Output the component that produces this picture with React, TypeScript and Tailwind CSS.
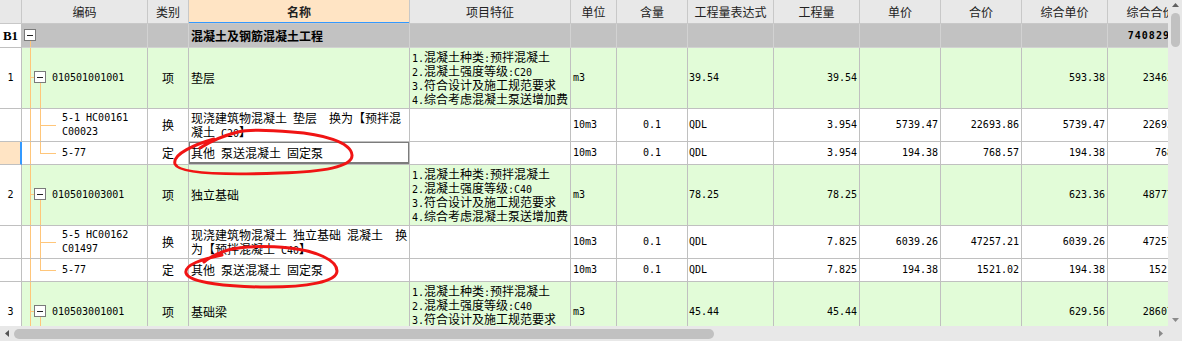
import React from "react";

type Row = {
  kind: "group" | "item" | "sub";
  h: string;
  no?: string;
  code?: string[];
  type?: string;
  name?: string[];
  feat?: string[];
  unit?: string;
  hl?: string;
  expr?: string;
  qty?: string;
  dj?: string;
  hj?: string;
  zhdj?: string;
  zhhj?: string;
  last?: boolean;
  selected?: boolean;
};

const W = [
  "w-[22px]",
  "w-[126px]",
  "w-[41px]",
  "w-[221px]",
  "w-[161px]",
  "w-[46px]",
  "w-[71px]",
  "w-[86px]",
  "w-[86px]",
  "w-[81px]",
  "w-[81px]",
  "w-[86px]",
  "w-[86px]",
];

const HEAD = ["", "编码", "类别", "名称", "项目特征", "单位", "含量", "工程量表达式", "工程量", "单价", "合价", "综合单价", "综合合价"];

const FEAT_C20 = ["1.混凝土种类:预拌混凝土", "2.混凝土强度等级:C20", "3.符合设计及施工规范要求", "4.综合考虑混凝土泵送增加费"];
const FEAT_C40 = ["1.混凝土种类:预拌混凝土", "2.混凝土强度等级:C40", "3.符合设计及施工规范要求", "4.综合考虑混凝土泵送增加费"];

const ROWS: Row[] = [
  { kind: "group", h: "h-[24px]", no: "B1", name: ["混凝土及钢筋混凝土工程"], zhhj: "740829.56" },
  {
    kind: "item", h: "h-[61px]", no: "1", code: ["010501001001"], type: "项", name: ["垫层"], feat: FEAT_C20,
    unit: "m3", expr: "39.54", qty: "39.54", zhdj: "593.38", zhhj: "23462.25",
  },
  {
    kind: "sub", h: "h-[33px]", code: ["5-1 HC00161", "C00023"], type: "换",
    name: ["现浇建筑物混凝土 垫层  换为【预拌混", "凝土 C20】"],
    unit: "10m3", hl: "0.1", expr: "QDL", qty: "3.954", dj: "5739.47", hj: "22693.86", zhdj: "5739.47", zhhj: "22693.86",
  },
  {
    kind: "sub", h: "h-[23px]", last: true, selected: true, code: ["5-77"], type: "定", name: ["其他 泵送混凝土 固定泵"],
    unit: "10m3", hl: "0.1", expr: "QDL", qty: "3.954", dj: "194.38", hj: "768.57", zhdj: "194.38", zhhj: "768.57",
  },
  {
    kind: "item", h: "h-[61px]", no: "2", code: ["010501003001"], type: "项", name: ["独立基础"], feat: FEAT_C40,
    unit: "m3", expr: "78.25", qty: "78.25", zhdj: "623.36", zhhj: "48777.92",
  },
  {
    kind: "sub", h: "h-[33px]", code: ["5-5 HC00162", "C01497"], type: "换",
    name: ["现浇建筑物混凝土 独立基础 混凝土  换", "为【预拌混凝土 C40】"],
    unit: "10m3", hl: "0.1", expr: "QDL", qty: "7.825", dj: "6039.26", hj: "47257.21", zhdj: "6039.26", zhhj: "47257.21",
  },
  {
    kind: "sub", h: "h-[23px]", last: true, code: ["5-77"], type: "定", name: ["其他 泵送混凝土 固定泵"],
    unit: "10m3", hl: "0.1", expr: "QDL", qty: "7.825", dj: "194.38", hj: "1521.02", zhdj: "194.38", zhhj: "1521.02",
  },
  {
    kind: "item", h: "h-[61px]", no: "3", code: ["010503001001"], type: "项", name: ["基础梁"], feat: FEAT_C40,
    unit: "m3", expr: "45.44", qty: "45.44", zhdj: "629.56", zhhj: "28607.21",
  },
];

const BASE = "shrink-0 h-full border-r border-b flex items-center overflow-hidden";
const MONO = "font-['DejaVu_Sans_Mono',monospace] text-[10px]";
const ORANGE = "bg-[#ffc67a]";

// ascii runs in the half-width mono face, the rest in the CJK face
function Txt({ s }: { s: string }) {
  const parts = s.split(/([\x20-\x7e]+)/).filter(Boolean);
  return (
    <>
      {parts.map((p, i) =>
        /^[\x20-\x7e]+$/.test(p) ? (
          <span key={i} className={`${MONO} leading-[10px]`}>{p}</span>
        ) : (
          <span key={i}>{p}</span>
        )
      )}
    </>
  );
}

function Lines({ lines, bold }: { lines?: string[]; bold?: boolean }) {
  if (!lines) return null;
  return (
    <div className={`flex flex-col whitespace-pre ${bold ? "font-bold" : ""}`}>
      {lines.map((l, i) => (
        <div key={i} className="h-[14px]">
          <Txt s={l} />
        </div>
      ))}
    </div>
  );
}

function Num({ v, bold }: { v?: string; bold?: boolean }) {
  if (!v) return null;
  return <span className={`${MONO} ${bold ? "font-bold tracking-[1px]" : ""}`}>{v}</span>;
}

function Box({ cls }: { cls: string }) {
  return (
    <div className={`absolute w-[12px] h-[12px] border border-[#7a7a7a] bg-white flex items-center justify-center ${cls}`}>
      <div className="w-[6px] h-px bg-[#222]" />
    </div>
  );
}

function rowBg(r: Row) {
  if (r.kind === "group") return "bg-[#c2c2c2] border-[#d2d2d2]";
  if (r.kind === "item") return "bg-[#e2fcd8] border-[#c0c0c0]";
  return "bg-white border-[#c0c0c0]";
}

function CodeCell({ r }: { r: Row }) {
  const pad = r.kind === "item" ? "pl-[30px]" : r.kind === "sub" ? "pl-[40px]" : "";
  return (
    <div className={`${W[1]} ${BASE} relative ${rowBg(r)} ${pad}`}>
      {r.kind === "group" && (
        <>
          <Box cls="left-[2px] top-[5px]" />
          <div className={`absolute left-[8px] top-[17px] bottom-[-1px] w-px ${ORANGE}`} />
        </>
      )}
      {r.kind === "item" && (
        <>
          <div className={`absolute left-[8px] top-0 bottom-[-1px] w-px ${ORANGE}`} />
          <div className={`absolute left-[8px] top-[29px] w-[4px] h-px ${ORANGE}`} />
          <Box cls="left-[12px] top-[23px]" />
          <div className={`absolute left-[18px] top-[35px] bottom-[-1px] w-px ${ORANGE}`} />
        </>
      )}
      {r.kind === "sub" && (
        <>
          <div className={`absolute left-[8px] top-0 bottom-[-1px] w-px ${ORANGE}`} />
          <div className={`absolute left-[18px] top-0 w-px ${ORANGE} ${r.last ? "h-1/2" : "bottom-[-1px]"}`} />
          <div className={`absolute left-[18px] top-1/2 w-[16px] h-px ${ORANGE}`} />
        </>
      )}
      {r.code && (
        <div className={`flex flex-col whitespace-pre ${MONO}`}>
          {r.code.map((c) => (
            <div key={c} className="h-[14px] leading-[14px]">{c}</div>
          ))}
        </div>
      )}
    </div>
  );
}

function DataRow({ r }: { r: Row }) {
  const bg = rowBg(r);
  const isGroup = r.kind === "group";
  return (
    <div className={`flex ${r.h}`}>
      <div
        className={`${W[0]} ${BASE} justify-center border-[#c0c0c0] ${
          r.selected ? "bg-[#ffe4c4] border-r-2 border-r-[#3399ff]" : "bg-white"
        }`}
      >
        {isGroup ? (
          <span className="font-['Liberation_Serif',serif] font-bold text-[13px]">{r.no}</span>
        ) : (
          <Num v={r.no} />
        )}
      </div>
      <CodeCell r={r} />
      <div className={`${W[2]} ${BASE} ${bg} justify-center`}>{r.type}</div>
      <div className={`${W[3]} ${BASE} ${bg} relative pl-[2px]`}>
        <Lines lines={r.name} bold={isGroup} />
        {r.selected && <div className="absolute -left-px -top-px right-[-1px] bottom-0 border-2 border-[#7c7c7c]" />}
      </div>
      <div className={`${W[4]} ${BASE} ${bg} pl-[2px]`}>
        <Lines lines={r.feat} />
      </div>
      <div className={`${W[5]} ${BASE} ${bg} pl-[2px]`}>
        <Num v={r.unit} />
      </div>
      <div className={`${W[6]} ${BASE} ${bg} justify-center`}>
        <Num v={r.hl} />
      </div>
      <div className={`${W[7]} ${BASE} ${bg} pl-px`}>
        <Num v={r.expr} />
      </div>
      <div className={`${W[8]} ${BASE} ${bg} justify-end pr-[2px]`}>
        <Num v={r.qty} />
      </div>
      <div className={`${W[9]} ${BASE} ${bg} justify-end pr-[2px]`}>
        <Num v={r.dj} />
      </div>
      <div className={`${W[10]} ${BASE} ${bg} justify-end pr-[2px]`}>
        <Num v={r.hj} />
      </div>
      <div className={`${W[11]} ${BASE} ${bg} justify-end pr-[2px]`}>
        <Num v={r.zhdj} />
      </div>
      <div className={`${W[12]} ${BASE} ${bg} justify-end pr-[2px]`}>
        <Num v={r.zhhj} bold={isGroup} />
      </div>
    </div>
  );
}

function HeaderRow() {
  return (
    <div className="flex h-[24px]">
      {HEAD.map((h, i) => (
        <div
          key={i}
          className={`${W[i]} ${BASE} relative justify-center border-[#c8c8c8] text-[#222] whitespace-nowrap ${
            i === 3 ? "bg-[#ffe4c4] font-bold" : "bg-[#e8e8e8]"
          }`}
        >
          {h}
          {i === 3 && <div className="absolute left-0 right-0 bottom-[-1px] h-[2px] bg-[#3399ff] z-10" />}
        </div>
      ))}
    </div>
  );
}

// hand-drawn red rings from the screenshot
function Annotations() {
  return (
    <svg className="absolute left-0 top-0 pointer-events-none z-20" width="1168" height="326" fill="none">
      <path
        d="M214 139 C196 144 172 154 175 164 C179 174 228 175 280 173 C322 172 353 167 352 155 C351 142 322 134 292 132 C268 130 250 129 238 132 C226 135 214 139 200 148"
        stroke="#f01414"
        strokeWidth="3"
        strokeLinecap="round"
      />
      <path
        d="M222 255 C202 259 184 265 186 273 C189 283 230 287 268 287 C306 287 337 282 337 271 C337 260 316 251 290 248 C266 246 242 246 228 250 C218 253 210 257 204 262"
        stroke="#f01414"
        strokeWidth="3"
        strokeLinecap="round"
      />
    </svg>
  );
}

function VScroll() {
  return (
    <div className="w-[14px] h-full bg-[#e8e8e8] flex flex-col items-center">
      <svg width="7" height="4" className="mt-[3px]">
        <path d="M0 4 L3.5 0 L7 4 Z" fill="#606060" />
      </svg>
      <div className="mt-[6px] w-[9px] h-[34px] rounded-full bg-[#c1c1c1]" />
      <div className="flex-1" />
      <svg width="7" height="4" className="mb-[4px]">
        <path d="M0 0 L3.5 4 L7 0 Z" fill="#8a8a8a" />
      </svg>
    </div>
  );
}

function HScroll() {
  return (
    <div className="h-[15px] bg-[#e8e8e8] flex items-center">
      <div className="w-[14px] flex justify-center">
        <svg width="4" height="7">
          <path d="M4 0 L0 3.5 L4 7 Z" fill="#555" />
        </svg>
      </div>
      <div className="w-[700px] h-[10px] rounded-full bg-[#c1c1c1]" />
      <div className="flex-1" />
      <div className="w-[14px] flex justify-center">
        <svg width="4" height="7">
          <path d="M0 0 L4 3.5 L0 7 Z" fill="#8a8a8a" />
        </svg>
      </div>
      <div className="w-[14px] h-full bg-[#e8e8e8]" />
    </div>
  );
}

export default function App() {
  return (
    <div className="w-[1182px] h-[341px] flex flex-col bg-white overflow-hidden text-black text-[12px] leading-[14px] font-['Noto_Sans_CJK_SC',sans-serif]">
      <div className="flex h-[326px]">
        <div className="relative w-[1168px] h-[326px] overflow-hidden">
          <div className="w-[1194px]">
            <HeaderRow />
            {ROWS.map((r, i) => (
              <DataRow key={i} r={r} />
            ))}
          </div>
          <Annotations />
        </div>
        <VScroll />
      </div>
      <HScroll />
    </div>
  );
}
